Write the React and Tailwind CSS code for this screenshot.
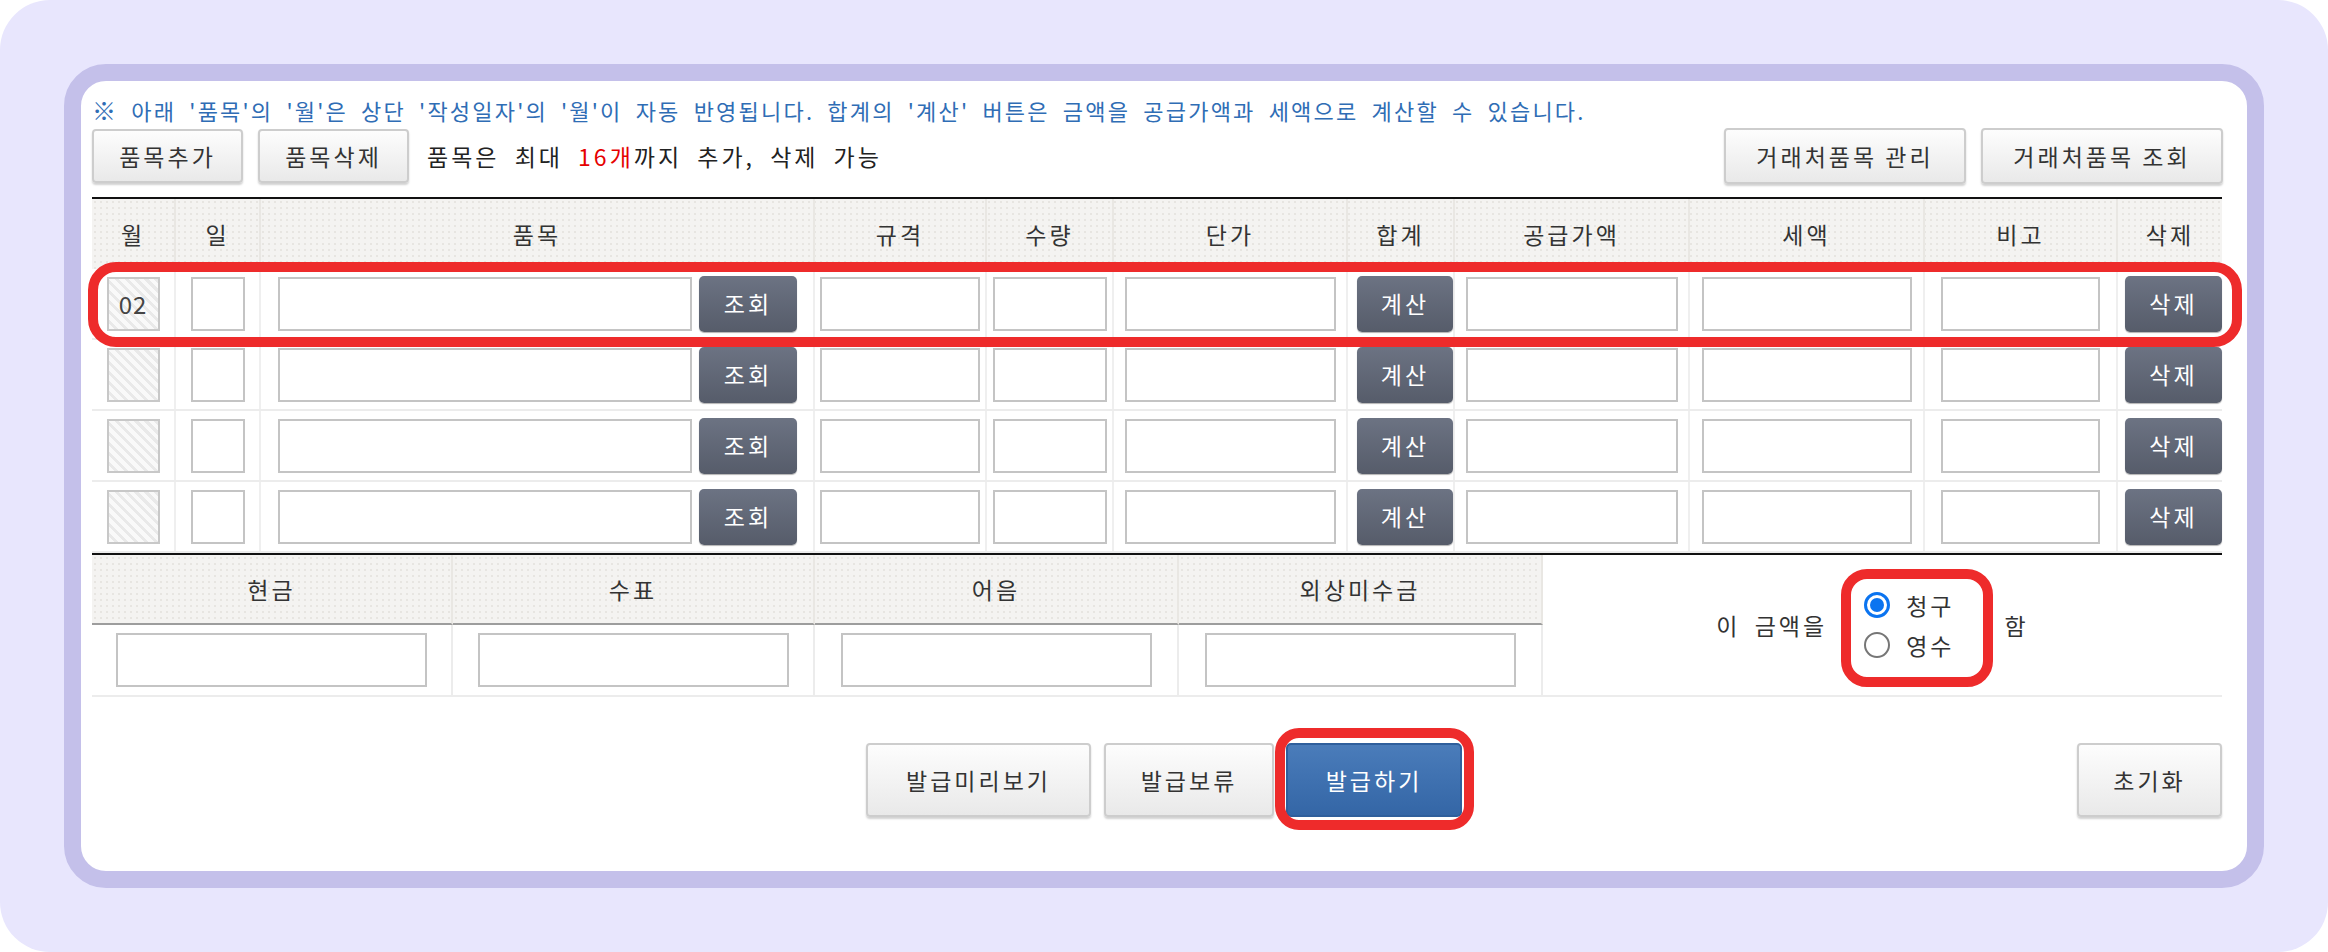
import React from "react";

const COLS = "grid-cols-[84px_85px_554px_172px_127px_234px_107px_235px_235px_193px_104px]";

function LightBtn({ children, className = "" }) {
  return (
    <button
      className={
        "flex items-center justify-center rounded-[4px] border-2 border-[#cdcdcd] bg-gradient-to-b from-[#fdfdfd] to-[#e9e9e9] text-[#333] shadow-[0_2px_2px_rgba(0,0,0,0.18)] " +
        className
      }
    >
      {children}
    </button>
  );
}

function DarkBtn({ children }) {
  return (
    <button className="flex h-[56px] w-[98px] items-center justify-center rounded-[5px] bg-gradient-to-b from-[#6c7383] to-[#565c6a] text-white shadow-[0_1px_1px_rgba(0,0,0,0.3)]">
      {children}
    </button>
  );
}

function Box({ w }) {
  return <div className={"h-[54px] border-2 border-[#c4c4c4] bg-white " + w} />;
}

function Row({ first }) {
  return (
    <div className={"relative grid h-[71px] border-b-2 border-[#ececec] " + COLS}>
      <div className="flex items-center justify-center border-r-2 border-[#efefef]">
        <div className="flex h-[54px] w-[53px] items-center justify-center border-2 border-[#c8c8c8] bg-[repeating-linear-gradient(45deg,#f9f9f9_0px,#f9f9f9_4px,#e9e9e9_4px,#e9e9e9_7px)] text-[24px] tracking-[1px] text-[#444]">
          {first ? "02" : ""}
        </div>
      </div>
      <div className="flex items-center justify-center border-r-2 border-[#efefef]">
        <Box w="w-[54px]" />
      </div>
      <div className="flex items-center gap-[7px] border-r-2 border-[#efefef] pl-[17px]">
        <Box w="w-[414px]" />
        <DarkBtn>조회</DarkBtn>
      </div>
      <div className="flex items-center justify-center border-r-2 border-[#efefef]">
        <Box w="w-[160px]" />
      </div>
      <div className="flex items-center justify-center border-r-2 border-[#efefef]">
        <Box w="w-[114px]" />
      </div>
      <div className="flex items-center justify-center border-r-2 border-[#efefef]">
        <Box w="w-[211px]" />
      </div>
      <div className="flex items-center border-r-2 border-[#efefef] pl-[9px]">
        <DarkBtn>계산</DarkBtn>
      </div>
      <div className="flex items-center justify-center border-r-2 border-[#efefef]">
        <Box w="w-[212px]" />
      </div>
      <div className="flex items-center justify-center border-r-2 border-[#efefef]">
        <Box w="w-[210px]" />
      </div>
      <div className="flex items-center justify-center border-r-2 border-[#efefef]">
        <Box w="w-[159px]" />
      </div>
      <div className="flex items-center pl-[7px]">
        <DarkBtn>삭제</DarkBtn>
      </div>
      {first && (
        <div className="pointer-events-none absolute -bottom-[9px] -left-[4px] -right-[20px] -top-[7px] z-10 rounded-[28px] border-[10px] border-[#ee2b2b]" />
      )}
    </div>
  );
}

const HEADERS = ["월", "일", "품목", "규격", "수량", "단가", "합계", "공급가액", "세액", "비고", "삭제"];

export default function App() {
  return (
    <div className="h-[952px] w-[2328px] bg-white font-['Noto_Sans_CJK_KR','Noto_Sans',sans-serif] text-[23px] tracking-[3px] text-[#333]">
      <div className="h-full w-full rounded-[50px] bg-[#e8e6fd] p-[64px]">
        <div className="h-[824px] rounded-[42px] border-[17px] border-[#c4c0ea] bg-white">
          <div className="flex h-full flex-col pl-[11px] pr-[24px] pt-[14px]">
            {/* note */}
            <div className="h-[30px] whitespace-nowrap text-[22px] leading-[30px] tracking-[2.2px] text-[#2f6db5] [word-spacing:6px]">
              <span className="text-[24px]">※</span> 아래 '품목'의 '월'은 상단 '작성일자'의 '월'이 자동 반영됩니다. 합계의 '계산' 버튼은 금액을 공급가액과 세액으로 계산할 수 있습니다.
            </div>
            {/* toolbar */}
            <div className="mt-[4px] flex h-[54px] items-center">
              <LightBtn className="h-[54px] w-[151px]">품목추가</LightBtn>
              <LightBtn className="ml-[15px] h-[54px] w-[151px]">품목삭제</LightBtn>
              <div className="ml-[18px] text-[#222] [word-spacing:7px]">
                품목은 최대 <span className="text-[#e60000]">16개</span>까지 추가, 삭제 가능
              </div>
              <div className="ml-auto flex gap-[15px] [word-spacing:6px]">
                <LightBtn className="h-[56px] w-[242px]">거래처품목 관리</LightBtn>
                <LightBtn className="h-[56px] w-[242px]">거래처품목 조회</LightBtn>
              </div>
            </div>
            {/* items table */}
            <div className="mt-[14px] w-[2130px] border-t-2 border-[#111]">
              <div className={"grid h-[70px] bg-[#f4f3f1] bg-[radial-gradient(#e7e5e1_1px,transparent_1px)] bg-[length:6px_6px] " + COLS}>
                {HEADERS.map((h, i) => (
                  <div
                    key={i}
                    className={
                      "flex items-center justify-center " +
                      (i < HEADERS.length - 1 ? "border-r-2 border-[#e9e7e3]" : "")
                    }
                  >
                    {h}
                  </div>
                ))}
              </div>
              <Row first />
              <Row />
              <Row />
              <Row />
            </div>
            {/* payment table */}
            <div className="grid w-[2130px] grid-cols-[361px_362px_364px_364px_679px] border-t-2 border-[#111]">
              {["현금", "수표", "어음", "외상미수금"].map((h, i) => (
                <div
                  key={h}
                  className="flex h-[70px] items-center justify-center border-b-2 border-r-2 border-[#e9e7e3] border-b-[#9d9d9d] bg-[#f4f3f1] bg-[radial-gradient(#e7e5e1_1px,transparent_1px)] bg-[length:6px_6px]"
                  style={{ gridColumn: i + 1, gridRow: 1 }}
                >
                  {h}
                </div>
              ))}
              {[0, 1, 2, 3].map((i) => (
                <div
                  key={i}
                  className="flex h-[72px] items-center justify-center border-b-2 border-r-2 border-[#ececec]"
                  style={{ gridColumn: i + 1, gridRow: 2 }}
                >
                  <Box w="w-[311px]" />
                </div>
              ))}
              <div
                className="flex items-center justify-center border-b-2 border-[#ececec] pr-[20px] [word-spacing:6px]"
                style={{ gridColumn: 5, gridRow: "1 / span 2" }}
              >
                <span>이 금액을</span>
                <div className="relative ml-[37px] mr-[50px] flex flex-col gap-[6px]">
                  <div className="flex h-[34px] items-center">
                    <div className="flex h-[26px] w-[26px] items-center justify-center rounded-full border-[3px] border-[#0b74f0]">
                      <div className="h-[14px] w-[14px] rounded-full bg-[#0b74f0]" />
                    </div>
                    <span className="ml-[16px]">청구</span>
                  </div>
                  <div className="flex h-[34px] items-center">
                    <div className="h-[26px] w-[26px] rounded-full border-2 border-[#767676]" />
                    <span className="ml-[16px]">영수</span>
                  </div>
                  <div className="pointer-events-none absolute -bottom-[25px] -left-[23px] -right-[39px] -top-[19px] rounded-[26px] border-[10px] border-[#ee2b2b]" />
                </div>
                <span>함</span>
              </div>
            </div>
            {/* bottom buttons */}
            <div className="mt-[46px] grid w-[2130px] grid-cols-[1fr_auto_1fr] items-center">
              <div />
              <div className="ml-[14px] flex items-center">
                <LightBtn className="h-[74px] w-[225px]">발급미리보기</LightBtn>
                <LightBtn className="ml-[13px] h-[74px] w-[170px]">발급보류</LightBtn>
                <div className="relative ml-[12px]">
                  <button className="flex h-[74px] w-[176px] items-center justify-center rounded-[5px] border-2 border-[#2f5f9c] bg-gradient-to-b from-[#4a7cba] to-[#3466a6] text-white">
                    발급하기
                  </button>
                  <div className="pointer-events-none absolute -bottom-[13px] -left-[11px] -right-[12px] -top-[15px] rounded-[24px] border-[10px] border-[#ee2b2b]" />
                </div>
              </div>
              <div className="flex justify-end">
                <LightBtn className="h-[74px] w-[145px]">초기화</LightBtn>
              </div>
            </div>
          </div>
        </div>
      </div>
    </div>
  );
}
